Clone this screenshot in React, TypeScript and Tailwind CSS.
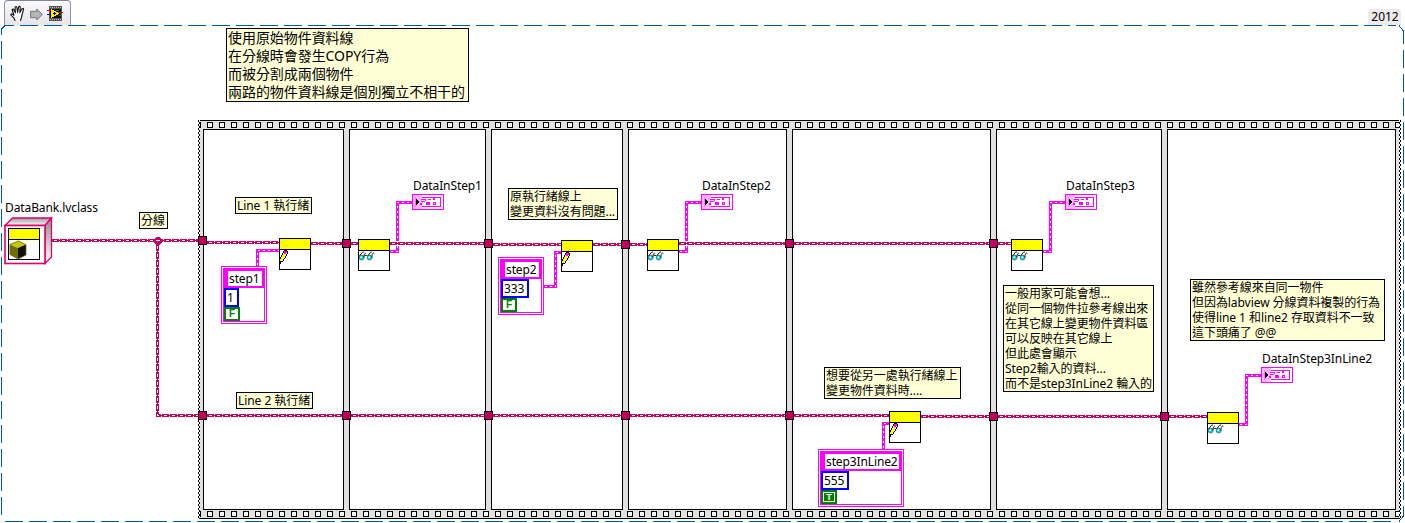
import React from "react";

const WIRE = "#c4005f";
const PINK = "#ff00ff";

/* ---------- sequence structure ---------- */

const FRAME_WIDTHS = [
  "w-[141px]",
  "w-[137px]",
  "w-[132px]",
  "w-[159px]",
  "w-[199px]",
  "w-[166px]",
  "w-[229px]",
];

function FilmStrip() {
  return (
    <div className="flex gap-[6px] overflow-hidden h-[8px] pt-px -ml-px">
      <span className="size-[6px] shrink-0 border border-black bg-white -ml-[2px]" />
      {Array.from({ length: 100 }, (_, i) => (
        <span key={i} className="size-[6px] shrink-0 border border-black bg-white" />
      ))}
    </div>
  );
}

function Checker({ id, flip }: { id: string; flip?: boolean }) {
  return (
    <svg width="2" height="399" className="shrink-0" shapeRendering="crispEdges">
      <defs>
        <pattern id={id} width="2" height="4" patternUnits="userSpaceOnUse">
          <rect width="2" height="4" fill="#fff" />
          <rect x={flip ? 1 : 0} width="1" height="2" fill="#000" />
          <rect x={flip ? 0 : 1} y="2" width="1" height="2" fill="#000" />
        </pattern>
      </defs>
      <rect width="2" height="399" fill={`url(#${id})`} />
    </svg>
  );
}

function SequenceStructure() {
  return (
    <div className="relative ml-[198px] flex h-[399px] w-[1203px] bg-[#e0e0e0]">
      <div className="flex w-full flex-col overflow-hidden border-y border-black">
        <FilmStrip />
        <div className="flex flex-1 gap-[5px] px-[5px]">
          {FRAME_WIDTHS.map((w, i) => (
            <div key={i} className={`${w} shrink-0 border border-black bg-white`} />
          ))}
        </div>
        <FilmStrip />
      </div>
      <div className="absolute left-0 top-0">
        <Checker id="edge-left" />
      </div>
      <div className="absolute right-0 top-0">
        <Checker id="edge-right" flip />
      </div>
    </div>
  );
}

/* ---------- wires ---------- */

function ClassWire({ d, halo }: { d: string; halo?: boolean }) {
  return (
    <g fill="none">
      {halo && <path d={d} stroke="#fff" strokeWidth="5" />}
      <path d={d} stroke={WIRE} strokeWidth="3" strokeDasharray="7 1" />
      <path d={d} stroke={WIRE} strokeWidth="1" />
      <path d={d} stroke="#fff" strokeWidth="1" strokeDasharray="3 5" strokeDashoffset="-2" />
    </g>
  );
}

function ClusterWire({ d }: { d: string }) {
  return (
    <g fill="none">
      <path d={d} stroke={PINK} strokeWidth="3" />
      <path d={d} stroke="#fff" strokeWidth="1" strokeDasharray="2 3" strokeDashoffset="-1" />
    </g>
  );
}

const CLUSTER_WIRES = [
  "M257.5 266V250.5H279",
  "M390 251.5H397.5V202.5H412",
  "M544 286.5H555.5V252.5H561",
  "M679 251.5H686.5V202.5H701",
  "M1043 251.5H1050.5V202.5H1065",
  "M883.5 449V423.5H889",
  "M1239 424.5H1246.5V375.5H1261",
];

const CLASS_WIRES = [
  "M52 240.5H198",
  "M157.5 244V415.5H198",
  "M207 242.5H279",
  "M311 243.5H342",
  "M351 243.5H358",
  "M390 243.5H484",
  "M493 244.5H561",
  "M593 244.5H621",
  "M630 244.5H647",
  "M679 243.5H785",
  "M794 243.5H989",
  "M998 243.5H1011",
  "M207 415.5H342",
  "M351 415.5H484",
  "M493 415.5H621",
  "M630 415.5H785",
  "M794 415.5H889",
  "M921 416.5H989",
  "M998 416.5H1160",
  "M1169 416.5H1207",
];

const TUNNELS: [number, number][] = [
  [198, 236], [342, 239], [484, 239], [621, 240], [785, 239], [989, 239],
  [198, 411], [342, 411], [484, 411], [621, 411], [785, 411], [989, 412], [1160, 412],
];

function Wiring() {
  return (
    <svg className="absolute left-0 top-0" width="1405" height="523" shapeRendering="crispEdges">
      <g stroke="#005a9c" fill="none">
        <path d="M5 25.5H14M20 25.5H1396" strokeDasharray="18 6" />
        <path d="M1.5 41V516" strokeDasharray="18 6" />
        <path d="M1.5 29V35M1.5 29L5 25.5" />
        <path d="M5 521.5H1397" strokeDasharray="18 6" />
        <path d="M1403.5 50V516" strokeDasharray="18 6" />
        <path d="M1403.5 31V44M1399 25.5L1403.5 31" />
        <path d="M1399 521.5L1403.5 516" />
      </g>
      {CLUSTER_WIRES.map((d) => <ClusterWire key={d} d={d} />)}
      {CLASS_WIRES.map((d) => (
        <ClassWire key={d} d={d} halo={d.startsWith("M390") || d.startsWith("M679")} />
      ))}
      <path d="M156 237h4v1h1v1h1v4h-1v1h-1v1h-4v-1h-1v-1h-1v-4h1v-1h1z" fill={WIRE} />
      <path d="M156 240.5h4" stroke="#fff" />
      {TUNNELS.map(([x, y]) => (
        <rect key={`${x}-${y}`} x={x + 0.5} y={y + 0.5} width="8" height="8" fill={WIRE} stroke="#000" />
      ))}
    </svg>
  );
}

/* ---------- nodes ---------- */

function Pencil() {
  return (
    <svg width="30" height="19" viewBox="0 0 30 19" shapeRendering="crispEdges">
      <path d="M3 4h3v1h-1v2h-1v2h-1v1h-1v1h-2v-3h1v-2h1v-1h1z" fill="#ffff00" />
      <path d="M4 1h3v2h-1v1h-2z" fill="#ff00ff" />
      <path
        d="M4 0h3v1h-3zM7 1h1v3h-1zM3 1h1v2h-1zM2 3h1v2h-1zM1 5h1v2h-1zM0 7h1v2h-1zM6 4h1v2h-1zM5 6h1v2h-1zM4 8h1v1h-1zM3 9h1v2h-1zM2 11h1v1h-1zM0 11h2v1h-2zM0 12h1v2h-1z"
        fill="#000"
      />
    </svg>
  );
}

function Glasses() {
  return (
    <svg width="30" height="19" viewBox="0 0 30 19">
      <circle cx="2.6" cy="6.6" r="2.4" fill="#16d4dc" stroke="#0a6f78" strokeWidth="0.8" />
      <circle cx="10.6" cy="6.6" r="2.4" fill="#16d4dc" stroke="#0a6f78" strokeWidth="0.8" />
      <path d="M1.4 5.4h1.6v1.6h-1.6zM9.4 5.4h1.6v1.6h-1.6z" fill="#e6ffff" />
      <path
        d="M0.4 5L3.6 1.2L5 1M5 6.5C4.6 4.5 6 1 7 2.6M5.5 4.2L8 4.6M8.6 5L11.6 1.2L13 1M13 6.5C12.6 4.5 13.8 0.6 15.4 2.6"
        fill="none"
        stroke="#111"
        strokeWidth="0.95"
      />
    </svg>
  );
}

function SubVi({ pos, kind }: { pos: string; kind: "write" | "read" }) {
  return (
    <div className={`absolute ${pos} flex size-8 flex-col border border-black bg-white`}>
      <div className="h-[11px] shrink-0 border-b border-black bg-[#ffff00]" />
      {kind === "write" ? <Pencil /> : <Glasses />}
    </div>
  );
}

function Indicator({ pos }: { pos: string }) {
  return (
    <svg className={`absolute ${pos}`} width="32" height="16" shapeRendering="crispEdges">
      <rect x="0.5" y="0.5" width="31" height="15" fill="#fff" stroke={PINK} />
      <rect x="3.5" y="3.5" width="25" height="9" fill="#fff" stroke={PINK} />
      <rect x="1" y="1" width="9" height="14" fill="#ffb4ff" />
      <rect x="3" y="3" width="1" height="10" fill={PINK} opacity="0.35" />
      <path d="M4 5h1v1h1v1h1v2h-1v1h-1v1h-1z" fill="#000" />
      <path
        d="M9 5h5v1h-5zM9 7h4v1h-4zM16 5h3v1h-3zM21 4h2v2h-2zM8 9h2v2h-2zM14 8h4v3h-4zM21 8h3v3h-3zM13 6h1v1h-1z"
        fill={PINK}
      />
      <rect x="22" y="9" width="1" height="1" fill="#fff" />
    </svg>
  );
}

function ClusterConstant({ pos, width, name, value, flag }: {
  pos: string; width: string; name: string; value: string; flag: boolean;
}) {
  return (
    <div className={`absolute ${pos} ${width} h-[58px] border border-[#ff00ff] bg-white p-px`}>
      <div className="flex h-full flex-col items-start border border-[#ff00ff]">
        <div className="h-[19px] w-full shrink-0 bg-[#ff00ff] pl-[4px] pr-[2px] pt-[2px] pb-[2px]">
          <div className="h-full bg-white text-[12px] leading-[16px] pl-px tracking-[-0.12px] whitespace-nowrap">{name}</div>
        </div>
        <div className="h-[19px] shrink-0 border-2 border-[#0000ff] bg-white pl-px pr-[3px] text-[12px] leading-[16px] tracking-[-0.12px]">
          {value}
        </div>
        {flag ? (
          <div className="flex h-[14px] w-4 shrink-0 items-center justify-center bg-[#008000] p-[2px]">
            <span className="flex h-full w-full items-center justify-center border border-white font-[Liberation_Sans] text-[9px] font-bold leading-none text-white">
              T
            </span>
          </div>
        ) : (
          <div className="flex h-[14px] w-4 shrink-0 items-center justify-center border-2 border-[#008000] font-[Liberation_Sans] text-[10px] font-bold leading-none text-[#008000]">
            F
          </div>
        )}
      </div>
    </div>
  );
}

function Comment({ box, lines }: { box: string; lines: string[] }) {
  return (
    <div className={`absolute ${box} border border-black bg-[#ffffd6] pl-px tracking-[-0.06px] whitespace-nowrap`}>
      {lines.map((line) => <div key={line}>{line}</div>)}
    </div>
  );
}

function Label({ pos, children }: { pos: string; children: string }) {
  return (
    <div className={`absolute ${pos} text-[12px] leading-[16px] tracking-[-0.1px] whitespace-nowrap`}>{children}</div>
  );
}

function ClassConstant() {
  return (
    <svg className="absolute left-[4px] top-[216px]" width="49" height="49">
      <defs>
        <linearGradient id="side" x1="0" y1="0" x2="0" y2="1">
          <stop offset="0" stopColor="#8c8c8c" />
          <stop offset="1" stopColor="#ffffff" />
        </linearGradient>
        <linearGradient id="top" x1="0" y1="0" x2="0" y2="1">
          <stop offset="0" stopColor="#989898" />
          <stop offset="1" stopColor="#ffffff" />
        </linearGradient>
      </defs>
      <path d="M1 9.5L8.5 2H47.5L41 9.5z" fill="url(#top)" stroke="#dc0070" strokeWidth="1.3" />
      <path d="M41 9.5L47.5 2V41L41 47.5z" fill="url(#side)" stroke="#dc0070" strokeWidth="1.3" />
      <rect x="1" y="9.5" width="40" height="38" fill="#fff" stroke="#dc0070" strokeWidth="1.6" />
      <g shapeRendering="crispEdges">
        <rect x="4.5" y="12.5" width="31" height="31" fill="#fff" stroke="#000" />
        <rect x="5" y="13" width="30" height="10" fill="#ffff00" />
        <rect x="5" y="23" width="30" height="1" fill="#000" />
      </g>
      <path d="M6 28.5L14.5 25L22 28.5L14 32z" fill="#c8c800" />
      <path d="M6 28.5L14 32V43L6 38.5z" fill="#707000" />
      <path d="M14 32L22 28.5V39L14 43z" fill="#101010" />
      <path d="M6 28.5L14.5 25L22 28.5V39L14 43L6 38.5z" fill="none" stroke="#6b6b00" strokeWidth="0.8" />
    </svg>
  );
}

/* ---------- header ---------- */

function Header() {
  return (
    <header className="flex h-[25px] items-start justify-between pl-[4px] pr-[4px]">
      <div className="flex h-[25px] w-[67px] items-center rounded-t-[4px] border border-b-0 border-t-[#7d869e] border-x-[#8b93aa] bg-linear-to-b from-[#fafafc] to-[#e4e4ea] pl-[5px]">
        <svg width="16" height="17" viewBox="0 0 16 17" fill="#fff" stroke="#111" strokeWidth="1.1" strokeLinejoin="round" strokeLinecap="round">
          <path d="M5 15.5L3.6 12.6L1 10.2C.4 9.3 1.4 8.5 2.3 9.1L4 10.3L2.3 5.3C2 4 3.4 3.6 3.8 4.8L5.4 7.8L5.1 2.6C5.1 1.2 6.7 1.2 6.9 2.6L7.6 7.4L8.6 2.1C9 .9 10.3 1.2 10.2 2.5L9.9 7.6L11.8 4.1C12.5 3 13.9 3.6 13.4 4.9L12.3 9L11.5 12.3L10.5 15.5" />
        </svg>
        <svg className="ml-[4px] mt-[2px]" width="13" height="13" viewBox="0 0 13 13">
          <path d="M.6 3.3H6.8V1L12.3 6.5L6.8 12V9.7H.6z" fill="#b4b4b4" stroke="#757575" />
        </svg>
        <svg className="ml-[4px]" width="17" height="15" viewBox="0 0 17 15" shapeRendering="crispEdges">
          <rect x="2" y="0" width="13" height="15" fill="#555" />
          <rect x="3" y="3" width="11" height="9" fill="#111" />
          <path d="M3 1h1v1h-1zM5 1h1v1h-1zM7 1h1v1h-1zM9 1h1v1h-1zM11 1h1v1h-1zM13 1h1v1h-1zM3 13h1v1h-1zM5 13h1v1h-1zM7 13h1v1h-1zM9 13h1v1h-1zM11 13h1v1h-1zM13 13h1v1h-1z" fill="#bbb" />
          <path d="M9 4h3v1h-3zM12 9h2v1h-2z" fill="#0a8a1a" />
          <path d="M4 3L12.5 7.5L4 12z" fill="#ffee00" />
          <path d="M0 4h4v1h-4zM11 6h5v1h-5z" fill="#e00000" />
          <path d="M0 8h4v1h-4z" fill="#0000e0" />
          <path d="M6 7h3v1h-3zM7 6h1v3h-1z" fill="#000" />
        </svg>
      </div>
      <div className="mt-[9px] h-[16px] w-[33px] rounded-t-[3px] bg-[#ececec] pl-px text-center text-[12px] leading-[16px]">
        2012
      </div>
    </header>
  );
}

export default function App() {
  return (
    <div className="relative h-[523px] w-[1405px] overflow-hidden bg-white font-['Noto_Sans','Noto_Sans_CJK_TC',sans-serif] text-black">
      <Header />
      <main className="pt-[95px]">
        <SequenceStructure />
      </main>
      <Wiring />

      <Comment
        box="left-[226px] top-[28px] h-[74px] w-[243px] text-[14px] leading-[18px]"
        lines={["使用原始物件資料線", "在分線時會發生COPY行為", "而被分割成兩個物件", "兩路的物件資料線是個別獨立不相干的"]}
      />
      <Comment box="left-[139px] top-[212px] h-[17px] w-[29px] text-[12px] leading-[15px]" lines={["分線"]} />
      <Comment box="left-[235px] top-[197px] h-[17px] w-[77px] text-[12px] leading-[15px]" lines={["Line 1 執行緒"]} />
      <Comment box="left-[236px] top-[392px] h-[17px] w-[77px] text-[12px] leading-[15px]" lines={["Line 2 執行緒"]} />
      <Comment
        box="left-[508px] top-[188px] h-[32px] w-[110px] text-[12px] leading-[15px]"
        lines={["原執行緒線上", "變更資料沒有問題..."]}
      />
      <Comment
        box="left-[824px] top-[367px] h-[32px] w-[137px] text-[12px] leading-[15px]"
        lines={["想要從另一處執行緒線上", "變更物件資料時...."]}
      />
      <Comment
        box="left-[1003px] top-[285px] h-[107px] w-[151px] text-[12px] leading-[15px]"
        lines={[
          "一般用家可能會想...",
          "從同一個物件拉參考線出來",
          "在其它線上變更物件資料區",
          "可以反映在其它線上",
          "但此處會顯示",
          "Step2輸入的資料...",
          "而不是step3InLine2 輪入的",
        ]}
      />
      <Comment
        box="left-[1190px] top-[279px] h-[62px] w-[195px] text-[12px] leading-[15px]"
        lines={["雖然參考線來自同一物件", "但因為labview 分線資料複製的行為", "使得line 1 和line2 存取資料不一致", "這下頭痛了 @@"]}
      />

      <Label pos="left-[5px] top-[200px]">DataBank.lvclass</Label>
      <Label pos="left-[413px] top-[178px]">DataInStep1</Label>
      <Label pos="left-[702px] top-[178px]">DataInStep2</Label>
      <Label pos="left-[1066px] top-[178px]">DataInStep3</Label>
      <Label pos="left-[1262px] top-[351px]">DataInStep3InLine2</Label>

      <ClassConstant />

      <SubVi pos="left-[279px] top-[238px]" kind="write" />
      <SubVi pos="left-[358px] top-[239px]" kind="read" />
      <SubVi pos="left-[561px] top-[240px]" kind="write" />
      <SubVi pos="left-[647px] top-[239px]" kind="read" />
      <SubVi pos="left-[1011px] top-[239px]" kind="read" />
      <SubVi pos="left-[889px] top-[411px]" kind="write" />
      <SubVi pos="left-[1207px] top-[412px]" kind="read" />

      <Indicator pos="left-[412px] top-[194px]" />
      <Indicator pos="left-[701px] top-[194px]" />
      <Indicator pos="left-[1065px] top-[194px]" />
      <Indicator pos="left-[1261px] top-[367px]" />

      <ClusterConstant pos="left-[221px] top-[266px]" width="w-[46px]" name="step1" value="1" flag={false} />
      <ClusterConstant pos="left-[498px] top-[257px]" width="w-[46px]" name="step2" value="333" flag={false} />
      <ClusterConstant pos="left-[818px] top-[449px]" width="w-[86px]" name="step3InLine2" value="555" flag />
    </div>
  );
}
